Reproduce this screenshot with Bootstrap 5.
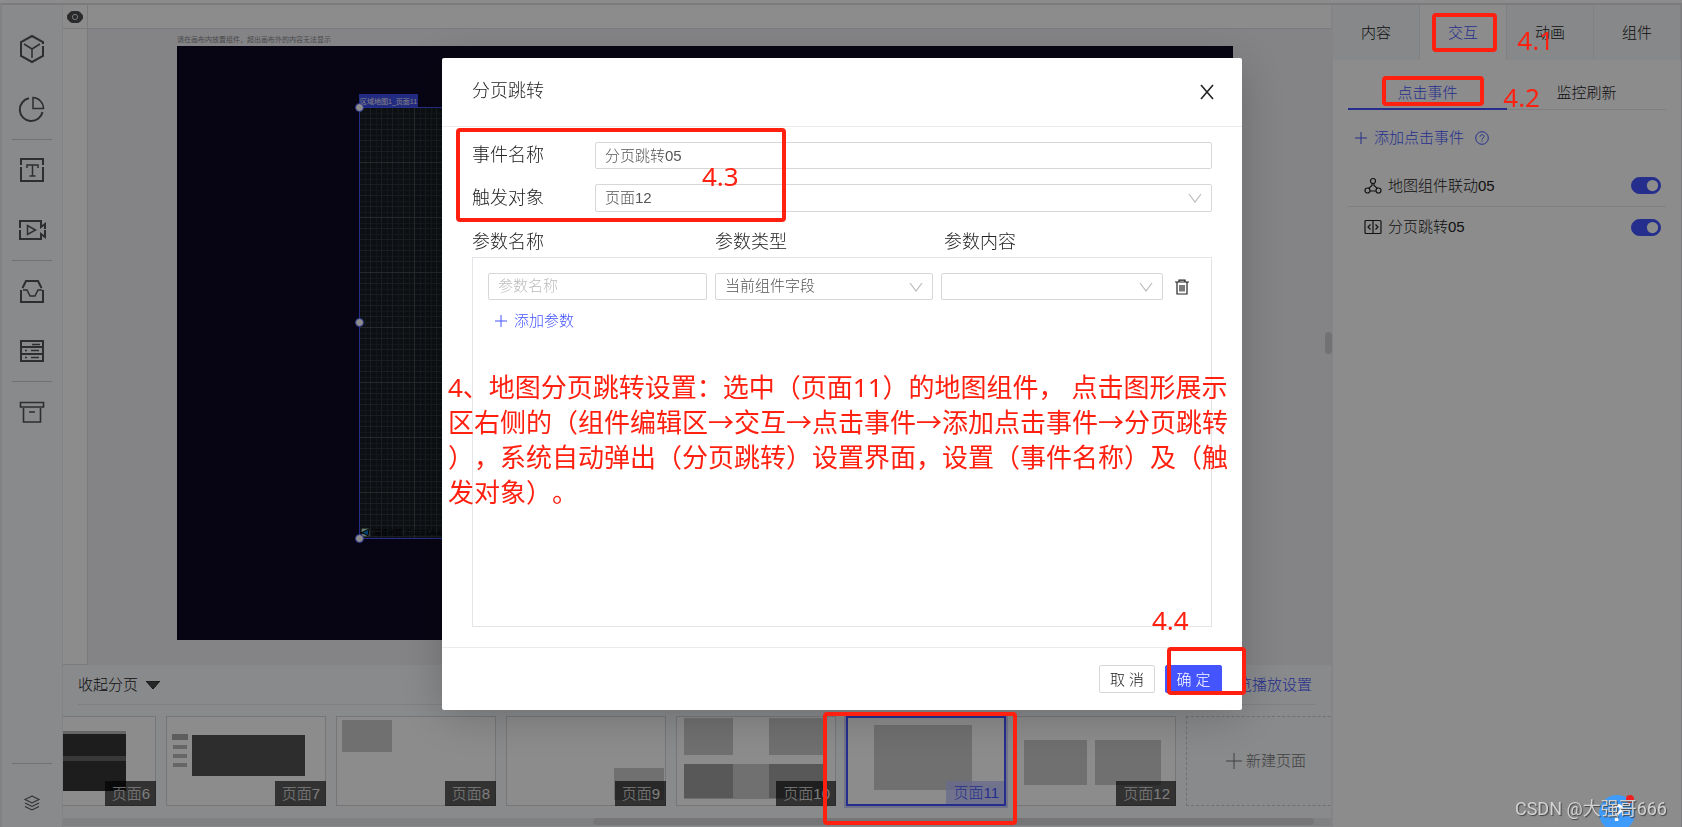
<!DOCTYPE html>
<html lang="zh-CN">
<head>
<meta charset="utf-8">
<meta name="viewport" content="width=device-width, initial-scale=1">
<title>分页跳转</title>
<link href="https://cdn.jsdelivr.net/npm/bootstrap@5.3.0/dist/css/bootstrap.min.css" rel="stylesheet">
<style>
  :root { --brand: #4455ff; --line: #e1e1e6; --soft: #f9fbfe; --note: #ff2010; }
  html, body { height: 100%; }
  body { font: 300 15px/24px "Liberation Sans", "Noto Sans CJK SC", sans-serif; color: #222; overflow: hidden; text-spacing-trim: space-all; }
  button { font: inherit; color: inherit; }
  svg { display: block; fill: none; stroke: currentColor; }
  .app { border-top: 3px solid #fff; height: 100vh; }
  .workspace { border-top: 2px solid var(--line); border-left: 2px solid #ededf2; }
  .plain-btn { border: 0; background: none; padding: 0; }
  .brand { color: var(--brand); }

  .tools { width: 61px; background: var(--soft); border-right: 1px solid #eeeef3; padding: 14px 10px 0; color: #555; }
  .tools button { height: 60px; display: flex; align-items: center; justify-content: center; }
  .tools hr { margin: 0; border-color: #cfd0d4; opacity: 1; width: 40px; align-self: center; }
  .tools .layers { height: 63px; padding-top: 14px; }
  .ico-lg { stroke-width: 2; color: #525556; }

  .ruler-top { height: 24px; background: #fff; border-bottom: 1px solid var(--line); }
  .eye { width: 25px; border-right: 1px solid var(--line); color: #4a4d50; }
  .ruler-left { width: 25px; background: #fff; border-right: 1px solid var(--line); border-bottom: 1px solid var(--line); }
  .canvas { background: #f1f1f6; padding: 4px 98px 25px 89px; }
  .hint { font-size: 7px; line-height: 13px; color: #85858a; font-weight: 400; }
  .artboard { background: #0e0a24; position: relative; }
  .map-widget { position: absolute; left: 182px; top: 61px; width: 692px; bottom: 101px; border: 1px solid var(--brand); background: #181e24; }
  .map-tag { position: absolute; left: -1px; top: -14px; height: 14px; padding: 0 1px; background: var(--brand); color: #fff; font-size: 7px; font-weight: 400; line-height: 15px; opacity: .92; white-space: nowrap; }
  .knob { position: absolute; left: -5px; width: 9px; height: 9px; border-radius: 50%; background: #fff; border: 1px solid var(--brand); z-index: 1; }
  .map-credit { position: absolute; left: 1px; bottom: 0; height: 10px; font-size: 7px; line-height: 10px; color: #000; }

  .pages { background: var(--soft); height: 162px; }
  .pages-head { height: 40px; margin: 0 15px; border-bottom: 1px solid #e8e9ee; }
  .strip { gap: 10px; margin-top: 11px; margin-left: -67px; }
  .strip-clip { overflow: hidden; }
  .page-card { flex: 0 0 160px; height: 90px; background: #fff; border: 1px solid #d8d8db; position: relative; padding: 0; }
  .page-card svg { width: 158px; height: 88px; stroke: none; }
  .page-card .page-name { position: absolute; right: -1px; bottom: -1px; height: 25px; padding: 0 6px 0 7px; background: rgba(0,0,0,.64); color: #e6e6e6; line-height: 25px; }
  .page-card.current { border: 2px solid var(--brand); box-shadow: 0 0 0 2px #cdd0fb; }
  .page-card.current svg { width: 156px; height: 86px; }
  .page-card.current .page-name { background: rgba(190,195,255,.75); color: var(--brand); right: 0; bottom: 0; height: 23px; line-height: 23px; padding: 0 5px 0 7px; }
  .page-card.fresh { border-style: dashed; border-color: #cdcdd1; color: #777; background: none; }
  .scroll-track { height: 8px; background: #eaebee; }
  .scroll-thumb { margin-left: 530px; margin-right: 17px; height: 7px; border-radius: 4px; background: #d7d8dc; }

  .panel { width: 351px; background: #fff; border-left: 2px solid #f0f0f4; border-right: 1px solid var(--line); position: relative; }
  .fold { position: absolute; left: -8px; top: 327px; width: 7px; height: 22px; border-radius: 4px; background: #cfcfd3; }
  .main-tabs button { flex: 1 1 0; height: 55px; border-right: 1px solid #eaebef; background: #f4f7fa; }
  .main-tabs button.active { background: #fff; color: var(--brand); }
  .sub-tabs { margin: 9px 15px 0 15px; border-bottom: 1px solid #e8e8ec; }
  .sub-tabs button { flex: 1 1 0; height: 41px; padding-top: 8px; border-bottom: 2px solid transparent; margin-bottom: -1px; }
  .sub-tabs button.active { color: var(--brand); border-color: var(--brand); }
  .add-event { margin: 16px 0 15px 22px; gap: 7px; }
  .event-row { margin: 0 15px; height: 41px; padding: 0 5px 0 16px; gap: 6px; }
  .event-row + .event-row { border-top: 1px solid #e8e8ec; }
  .event-row .form-check-input { width: 30px; height: 17px; margin: 0; background-color: var(--brand); border-color: var(--brand); --bs-form-switch-bg: url("data:image/svg+xml,%3csvg xmlns='http://www.w3.org/2000/svg' viewBox='-4 -4 8 8'%3e%3ccircle r='3.4' fill='%23fff'/%3e%3c/svg%3e"); background-image: var(--bs-form-switch-bg); background-position: right center; }

  .modal-backdrop.show { opacity: .45; }
  .modal.show { padding-left: 2px; }
  .modal-dialog.jump { max-width: 800px; margin: 58px auto 0; }
  .jump .modal-content { border: 0; border-radius: 2px; box-shadow: 0 6px 48px rgba(0,0,0,.22); height: 652px; }
  .jump .modal-header { height: 69px; padding: 0 27px 1px 30px; border-bottom: 1px solid #ebebeb; border-radius: 0; }
  .jump h1, .jump label, .cols span { font-size: 18px; line-height: 27px; font-weight: 300; margin: 0; }
  .jump .modal-body { padding: 15px 30px 20px; display: flex; flex-direction: column; }
  .field + .field { margin-top: 15px; }
  .field label { width: 123px; flex: none; }
  .jump .form-control, .jump .form-select { height: 27px; padding: 0 9px 2px; border: 1px solid #d7d7d7; border-radius: 2px; font: inherit; color: #555; line-height: 23px; box-shadow: none; }
  .jump .form-select { background-image: url("data:image/svg+xml,%3csvg xmlns='http://www.w3.org/2000/svg' viewBox='0 0 14 10'%3e%3cpath fill='none' stroke='%23bbb' stroke-width='1.2' d='M1 1l6 8 6-8'/%3e%3c/svg%3e"); background-size: 14px 10px; background-position: right 9px center; }
  .jump .form-control::placeholder { color: #bbb; }
  .jump .field .form-select { height: 28px; }
  .cols { margin-top: 17px; height: 28px; }
  .param-box { border: 1px solid #e3e3e8; padding: 15px; }
  .w-name { width: 219px; } .w-type { width: 218px; } .w-value { width: 222px; }
  .col-a { width: 243px; } .col-b { width: 229px; }
  .param-row { gap: 8px; }
  .add-param { margin: 9px 0 0 7px; gap: 7px; }
  .jump .modal-footer { height: 63px; padding: 0 20px; border-top: 1px solid #ebebeb; gap: 10px; }
  .jump .modal-footer .btn { margin: 0; height: 28px; width: 56px; padding: 0; border-radius: 2px; font: inherit; line-height: 25px; border: 1px solid #d7d7d7; color: #222; }
  .jump .modal-footer .btn-primary { width: 57px; background: var(--brand); border-color: var(--brand); color: #fff; }

  .note { position: absolute; margin: 0; color: var(--note); font: 400 26px/35px "Noto Sans", "Noto Sans CJK SC", sans-serif; white-space: nowrap; pointer-events: none; }
  .frame { position: absolute; border: 4px solid var(--note); border-radius: 4px; pointer-events: none; }
  .over { position: fixed; z-index: 1060; }
  .help { right: 47px; bottom: -4px; width: 36px; height: 36px; border-radius: 50%; background: #3f9bf9; color: #fff; font-size: 24px; font-weight: 700; line-height: 36px; }
  .help-dot { position: absolute; right: 1px; top: 0; width: 8px; height: 8px; border-radius: 50%; background: #f02020; }
  .watermark { right: 15px; bottom: 5px; font: 400 18px/27px Roboto, "Noto Sans CJK SC", sans-serif; color: #d2d2d2; text-shadow: 1px 1px 1px #444; }
</style>
</head>
<body>
<div class="app d-flex flex-column">
  <div class="workspace d-flex flex-grow-1">
    <nav class="tools d-flex flex-column flex-shrink-0" aria-label="组件">
      <button class="plain-btn" aria-label="组件库"><svg class="ico-lg" width="28" height="30" viewBox="0 0 28 30"><path d="M25 10V8L14 2 3 8v14l11 6 11-6V12"/><path stroke-width="1.5" d="M6 10l8 5 8-5M14 15v9"/></svg></button>
      <button class="plain-btn" aria-label="图表"><svg class="ico-lg" width="28" height="28" viewBox="0 0 28 28"><path d="M11 3.300A11.500 11.500 0 1 0 24.500 17"/><path stroke-width="1.500" d="M15 2.500v11h10.500A11 11 0 0 0 15 2.500z"/></svg></button>
      <hr>
      <button class="plain-btn" aria-label="文本"><svg class="ico-lg" width="28" height="28" viewBox="0 0 28 28"><path d="M3 9V3h22v6M3 11v14h22V11"/><path stroke-width="1.500" d="M9 12V9h11v3M14.500 9v11M11.500 20h6"/></svg></button>
      <button class="plain-btn" aria-label="视频"><svg class="ico-lg" width="30" height="24" viewBox="0 0 30 24"><path d="M3 10V3h21v6l4-3v5M3 12v9h21v-5l4 3v-7"/><path stroke-width="1.500" d="M10.500 7.500v9l8-4.500z"/></svg></button>
      <hr>
      <button class="plain-btn" aria-label="素材"><svg class="ico-lg" width="28" height="26" viewBox="0 0 28 26"><path d="M4.500 10L8 3h12l3.500 7M3 12v12h22V12"/><path stroke-width="1.500" d="M5 12h4l3 6h5l3-6h4"/></svg></button>
      <button class="plain-btn" aria-label="数据"><svg class="ico-lg" width="28" height="26" viewBox="0 0 28 26"><path d="M3 8V3h22v5M3 9h22v7H3zM3 16v7h22v-7"/><path stroke-width="1.500" d="M14 6.500h8M7 12.500h2M13 12.500h8M7 19.500h2M13 19.500h8"/></svg></button>
      <hr>
      <button class="plain-btn" aria-label="归档"><svg class="ico-lg" width="28" height="26" viewBox="0 0 28 26"><path stroke-width="1.600" d="M2.500 3.500h23V8h-23zM5.500 9v14h17V9M11 13h6"/></svg></button>
      <hr class="mt-auto">
      <button class="plain-btn layers" aria-label="图层"><svg width="18" height="18" viewBox="0 0 18 18" stroke-width="1.100"><path d="M9 2l7 3.500L9 9 2 5.500zM2 9l7 3.500L16 9M2 12.500L9 16l7-3.500"/></svg></button>
    </nav>

    <main class="d-flex flex-column flex-grow-1" style="min-width:0">
      <div class="ruler-top d-flex">
        <button class="plain-btn eye d-flex align-items-center justify-content-center" aria-label="显示"><svg width="16" height="12" viewBox="0 0 16 12" stroke="none"><path fill="currentColor" d="M8 0c4 0 7 2.500 8 6-1 3.500-4 6-8 6S1 9.500 0 6c1-3.500 4-6 8-6z"/><circle cx="8" cy="6" r="2.600" stroke="#ddd" stroke-width="1"/></svg></button>
      </div>
      <div class="d-flex flex-grow-1">
        <div class="ruler-left"></div>
        <div class="canvas d-flex flex-column flex-grow-1">
          <div class="hint">请在画布内放置组件，超出画布外的内容无法显示</div>
          <div class="artboard flex-grow-1">
            <div class="map-widget">
              <svg width="100%" height="100%"><defs>
                <pattern id="fine" width="11" height="11" patternUnits="userSpaceOnUse"><path stroke="#262d33" d="M5.500 0v11M0 5.500h11"/><path stroke="#30363c" d="M10.500 0v11M0 10.500h11"/></pattern>
                <pattern id="coarse" width="55" height="55" patternUnits="userSpaceOnUse"><path stroke="#454b50" d="M54.500 0v55M0 54.500h55"/></pattern></defs>
                <rect width="100%" height="100%" fill="url(#fine)" stroke="none"/><rect width="100%" height="100%" fill="url(#coarse)" stroke="none"/></svg>
              <div class="map-tag">区域地图1_页面11</div>
              <div class="map-credit d-flex gap-1"><svg width="9" height="9" viewBox="0 0 9 9" stroke="none"><rect width="9" height="9" rx="1" fill="#b9dcc0"/><path fill="#0878d8" d="M0 5l8-4-1 7-3-2z"/></svg><b>高德地图</b> © 2023 AutoNavi</div>
              <i class="knob" style="top:-5px"></i><i class="knob" style="top:calc(50% - 5px)"></i><i class="knob" style="bottom:-5px"></i>
            </div>
          </div>
        </div>
      </div>

      <section class="pages flex-shrink-0">
        <div class="pages-head d-flex align-items-center justify-content-between">
          <button class="plain-btn d-flex align-items-center gap-2">收起分页 <svg width="14" height="8" viewBox="0 0 14 8" stroke="none"><path fill="#444a48" d="M0 0h14L7 8z"/></svg></button>
          <a class="brand text-decoration-none pe-1" href="#">预览播放设置</a>
        </div>
        <div class="strip-clip"><div class="strip d-flex pb-1" id="strip"></div></div>
        <div class="scroll-track mt-2"><div class="scroll-thumb"></div></div>
      </section>
    </main>

    <aside class="panel flex-shrink-0">
      <div class="fold"></div>
      <div class="main-tabs d-flex">
        <button class="plain-btn">内容</button><button class="plain-btn active">交互</button><button class="plain-btn">动画</button><button class="plain-btn">组件</button>
      </div>
      <div class="sub-tabs d-flex">
        <button class="plain-btn active">点击事件</button><button class="plain-btn">监控刷新</button>
      </div>
      <button class="plain-btn add-event brand d-flex align-items-center">
        <svg width="12" height="12" viewBox="0 0 12 12"><path d="M6 0v12M0 6h12"/></svg>添加点击事件
        <svg class="ms-1" width="14" height="14" viewBox="0 0 14 14"><circle cx="7" cy="7" r="6.300"/><path d="M5 5.700C5 3 9 3 9 5.500 9 7 7 7 7 8.500M7 9.500v1.200"/></svg>
      </button>
      <div class="event-row d-flex align-items-center">
        <svg width="18" height="18" viewBox="0 0 18 18" stroke="#555" stroke-width="1.200"><circle cx="9" cy="4" r="2.500"/><circle cx="3.500" cy="13.500" r="2.500"/><circle cx="14.500" cy="13.500" r="2.500"/><path d="M8 6.500v2l-3.500 3M10 6.500v2l3.500 3M6 14h6"/></svg>
        <label class="flex-grow-1" for="ev1">地图组件联动05</label>
        <div class="form-switch p-0 d-flex"><input class="form-check-input" type="checkbox" role="switch" id="ev1" checked></div>
      </div>
      <div class="event-row d-flex align-items-center">
        <svg width="18" height="18" viewBox="0 0 18 18" stroke="#555" stroke-width="1.200"><rect x="1" y="2.500" width="16" height="13" rx="1"/><path d="M9 2v14M6.500 6.500L4 9l2.500 2.500M11.500 6.500L14 9l-2.500 2.500"/></svg>
        <label class="flex-grow-1" for="ev2">分页跳转05</label>
        <div class="form-switch p-0 d-flex"><input class="form-check-input" type="checkbox" role="switch" id="ev2" checked></div>
      </div>
    </aside>
  </div>
</div>

<div class="modal-backdrop show"></div>
<div class="modal show d-block overflow-hidden" role="dialog" aria-labelledby="dlgTitle">
  <div class="modal-dialog jump">
    <div class="modal-content">
      <div class="modal-header d-flex align-items-center justify-content-between">
        <h1 id="dlgTitle">分页跳转</h1>
        <button class="plain-btn" aria-label="关闭"><svg width="16" height="16" viewBox="0 0 16 16" stroke-width="1.600"><path d="M2 1l12 14M14 1L2 15"/></svg></button>
      </div>
      <div class="modal-body">
        <div class="field d-flex align-items-center"><label for="evName">事件名称</label><input class="form-control" id="evName" value="分页跳转05"></div>
        <div class="field d-flex align-items-center"><label for="target">触发对象</label><select class="form-select" id="target"><option>页面12</option></select></div>
        <div class="cols d-flex"><span class="col-a">参数名称</span><span class="col-b">参数类型</span><span>参数内容</span></div>
        <div class="param-box flex-grow-1">
          <div class="param-row d-flex align-items-center">
            <input class="form-control w-name" placeholder="参数名称" aria-label="参数名称">
            <select class="form-select w-type" aria-label="参数类型"><option>当前组件字段</option></select>
            <select class="form-select w-value" aria-label="参数内容"><option></option></select>
            <button class="plain-btn ms-1" aria-label="删除"><svg width="14" height="16" viewBox="0 0 14 16" stroke="#555" stroke-width="1.200"><path d="M0 3h14M4 3V1.200h6V3M2 3v12h10V3M5 6v6.500M7 6v6.500M9 6v6.500"/></svg></button>
          </div>
          <button class="plain-btn add-param brand d-flex align-items-center"><svg width="12" height="12" viewBox="0 0 12 12"><path d="M6 0v12M0 6h12"/></svg>添加参数</button>
        </div>
      </div>
      <div class="modal-footer">
        <button class="btn">取 消</button>
        <button class="btn btn-primary">确 定</button>
      </div>
      <div class="frame" style="left:14px;top:70px;width:330px;height:94px"></div>
      <div class="note" style="left:260px;top:101px">4.3</div>
      <p class="note" style="left:6px;top:312px">4、地图分页跳转设置：选中（页面11）的地图组件， 点击图形展示<br>区右侧的（组件编辑区→交互→点击事件→添加点击事件→分页跳转<br>），系统自动弹出（分页跳转）设置界面，设置（事件名称）及（触<br>发对象）。</p>
      <div class="note" style="left:710px;top:545px">4.4</div>
      <div class="frame" style="left:725px;top:589px;width:79px;height:48px"></div>
    </div>
  </div>
</div>

<div class="frame over" style="right:185px;top:13px;width:65px;height:39px"></div>
<div class="note over" style="right:128px;top:23px">4.1</div>
<div class="frame over" style="right:198px;top:76px;width:102px;height:30px"></div>
<div class="note over" style="right:142px;top:80px">4.2</div>
<div class="frame over" style="left:823px;bottom:2px;width:194px;height:113px"></div>
<button class="plain-btn over help" aria-label="帮助">?<i class="help-dot"></i></button>
<div class="over watermark">CSDN @大强哥666</div>

<script>
  // Thumbnail blocks per page: [x, y, width, height, colour]
  const pages = [
    ['页面6', [[60,14,69,3,'#bbb'],[60,17,69,57,'#353535'],[60,39,69,5,'#666']]],
    ['页面7', [[5,17,16,6,'#aaa'],[6,28,14,4,'#bbb'],[6,37,14,4,'#bbb'],[6,46,14,4,'#bbb'],[25,18,113,41,'#525252']]],
    ['页面8', [[5,3,50,32,'#ccc']]],
    ['页面9', [[107,51,50,32,'#ccc']]],
    ['页面10', [[7,1,49,37,'#ccc'],[92,1,56,37,'#ccc'],[7,47,141,35,'#ccc'],[7,47,49,34,'#a0a0a0'],[92,47,56,34,'#a0a0a0']]],
    ['页面11', [[26,7,98,65,'#ccc']], true],
    ['页面12', [[7,23,63,45,'#ccc'],[78,23,66,45,'#ccc']]]
  ];
  document.getElementById('strip').innerHTML = pages.map(([name, blocks, current]) =>
    `<button class="page-card${current ? ' current' : ''}"><svg>${blocks.map(([x, y, w, h, c]) =>
      `<rect x="${x}" y="${y}" width="${w}" height="${h}" fill="${c}"/>`).join('')}</svg><span class="page-name">${name}</span></button>`
  ).join('') + `<button class="page-card fresh d-flex align-items-center justify-content-center gap-1"><svg style="width:16px;height:16px;stroke:#777" viewBox="0 0 16 16"><path d="M8 0v16M0 8h16"/></svg>新建页面</button>`;
</script>
<script src="https://cdn.jsdelivr.net/npm/bootstrap@5.3.0/dist/js/bootstrap.bundle.min.js"></script>
</body>
</html>
